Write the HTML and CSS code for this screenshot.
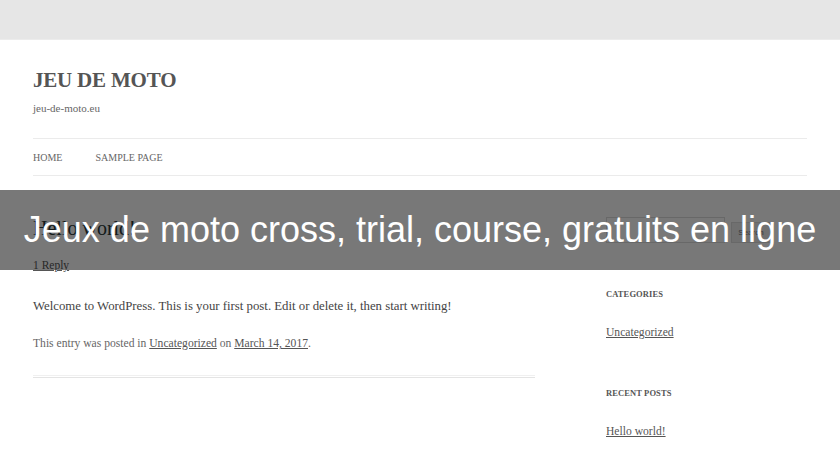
FILE: index.html
```html
<!DOCTYPE html>
<html>
<head>
	<title>jeu-de-moto.eu</title>
	<meta charset="UTF-8">
	<link rel="stylesheet" href="styles.css">
</head>
<body>
	<div class="topbar"></div>
	<div class="page">
		<header class="site-header">
			<h1 class="site-title">JEU DE MOTO</h1>
			<p class="site-desc">jeu-de-moto.eu</p>
		</header>
		<nav class="menu">
			<a href="#">Home</a>
			<a href="#">Sample Page</a>
		</nav>
		<div class="content">
			<main class="main">
				<article class="post">
					<h2 class="post-title">Hello world!</h2>
					<a class="reply" href="#">1 Reply</a>
					<p class="post-text">Welcome to WordPress. This is your first post. Edit or delete it, then start writing!</p>
					<p class="post-meta">This entry was posted in <a href="#">Uncategorized</a> on <a href="#">March 14, 2017</a>.</p>
				</article>
				<div class="post-sep"></div>
			</main>
			<aside class="sidebar">
				<form class="search">
					<input type="text" class="search-field">
					<button type="button" class="search-btn">Search</button>
				</form>
				<h3 class="widget-title">Categories</h3>
				<a class="widget-link" href="#">Uncategorized</a>
				<h3 class="widget-title">Recent Posts</h3>
				<a class="widget-link" href="#">Hello world!</a>
			</aside>
		</div>
	</div>
	<div class="banner">Jeux de moto cross, trial, course, gratuits en ligne</div>
</body>
</html>
```

FILE: styles.css
```css
body {
	margin: 0;
	background: #fff;
	font-family: "Liberation Serif", serif;
	color: #444;
	overflow: hidden;
}
a {
	color: #555;
}
.topbar {
	height: 39px;
	background: #e6e6e6;
	border-bottom: 1px solid #ececec;
}
.page {
	padding: 0 33px;
}
.site-header {
	padding-top: 27px;
}
.site-title {
	margin: 0;
	font-size: 21px;
	line-height: 26px;
	color: #555;
	letter-spacing: -0.2px;
}
.site-desc {
	margin: 8px 0 0;
	font-size: 11px;
	line-height: 14px;
	color: #666;
}
.menu {
	margin-top: 23px;
	height: 36px;
	border-top: 1px solid #ebebeb;
	border-bottom: 1px solid #ebebeb;
	display: flex;
	align-items: center;
	column-gap: 33px;
}
.menu a {
	font-size: 10px;
	text-transform: uppercase;
	text-decoration: none;
	color: #666;
}
.content {
	display: flex;
	justify-content: space-between;
}
.main {
	width: 502px;
	padding-top: 40px;
}
.post-title {
	margin: 0;
	font-size: 20px;
	line-height: 24px;
	font-weight: normal;
	color: #2c3a3a;
}
.reply {
	display: inline-block;
	margin-top: 19px;
	font-size: 11.5px;
	color: #555;
}
.post-text {
	margin: 25px 0 0;
	font-size: 12.8px;
	line-height: 16px;
	color: #444;
}
.post-meta {
	margin: 23px 0 0;
	font-size: 11.6px;
	line-height: 14px;
	color: #666;
}
.post-sep {
	margin-top: 24px;
	height: 1px;
	border-top: 1px solid #f0f0f0;
	border-bottom: 1px solid #e4e4e4;
}
.sidebar {
	width: 201px;
	padding-top: 41px;
}
.search {
	display: flex;
	align-items: flex-end;
	column-gap: 6px;
	height: 26px;
}
.search-field {
	box-sizing: border-box;
	width: 119px;
	height: 26px;
	margin: 0;
	border: 1px solid #ddd;
	background: #fff;
}
.search-btn {
	box-sizing: border-box;
	width: 40px;
	height: 21px;
	padding: 0;
	font-size: 8px;
	color: #777;
	background: #eee;
	border: 1px solid #ddd;
}
.widget-title {
	margin: 45px 0 0;
	font-size: 8.5px;
	line-height: 12px;
	letter-spacing: 0.1px;
	text-transform: uppercase;
	color: #555;
}
.widget-title + .widget-link {
	display: block;
	margin-top: 26px;
	font-size: 11.6px;
	line-height: 14px;
}
.widget-link + .widget-title {
	margin-top: 47px;
}
.banner {
	position: absolute;
	left: 0;
	right: 0;
	top: 190px;
	height: 80px;
	background: rgba(0, 0, 0, 0.53);
	color: #fff;
	font-family: "Liberation Sans", Arial, sans-serif;
	font-size: 36px;
	line-height: 80px;
	text-align: center;
	white-space: nowrap;
}
```
